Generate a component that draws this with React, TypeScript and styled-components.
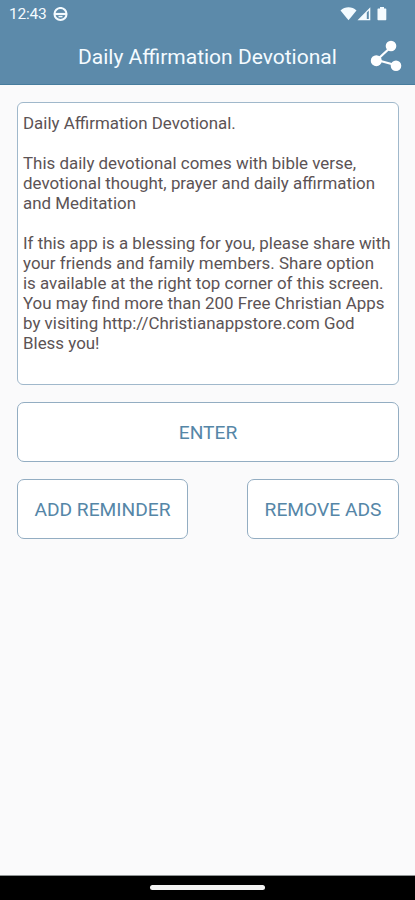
import React from 'react';
import styled, { createGlobalStyle } from 'styled-components';

const GlobalStyle = createGlobalStyle`
  *, *::before, *::after { box-sizing: border-box; }
  body { margin: 0; background: #fafafa; font-family: Roboto, sans-serif; }
`;

const Screen = styled.div`
  display: flex;
  flex-direction: column;
  width: 415px;
  height: 900px;
  background: #fafafb;
  overflow: hidden;
`;

const Header = styled.header`
  flex: none;
  height: 85px;
  background: #5c8aaa;
  border-bottom: 1px solid #477c9d;
  color: #f4fbff;
`;

const StatusBar = styled.div`
  display: flex;
  align-items: center;
  justify-content: space-between;
  height: 28px;
  padding: 0 28px 0 9px;
`;

const StatusGroup = styled.div<{ $gap: number }>`
  display: flex;
  align-items: center;
  gap: ${({ $gap }) => $gap}px;
`;

const Clock = styled.span`
  width: 38px;
  font-size: 15.5px;
  line-height: 28px;
  letter-spacing: -0.2px;
  white-space: nowrap;
`;

const TitleBar = styled.div`
  display: flex;
  align-items: center;
  justify-content: space-between;
  height: 56px;
  padding: 0 13px 0 78px;
`;

const Title = styled.h1`
  margin: 0;
  padding-top: 2px;
  font-size: 21px;
  font-weight: 400;
  line-height: 28px;
  white-space: nowrap;
`;

const IconButton = styled.button`
  display: flex;
  padding: 0;
  border: 0;
  background: none;
  color: #fff;
`;

const Content = styled.main`
  flex: 1;
  display: flex;
  flex-direction: column;
  gap: 17px;
  padding: 17px 16px 0 17px;
`;

const Message = styled.section`
  height: 283px;
  padding: 10px 0 0 5px;
  border: 1px solid #a0b8cb;
  border-radius: 6px;
  background: #fff;
  color: #5c5355;
  font-size: 16.92px;
  font-weight: 400;
  line-height: 20px;
  white-space: pre;
`;

const ButtonRow = styled.div`
  display: flex;
  justify-content: space-between;
`;

const OutlineButton = styled.button<{ $width: number }>`
  width: ${({ $width }) => $width}px;
  height: 60px;
  padding: 0;
  border: 1px solid #93adc2;
  border-radius: 7px;
  background: #fff;
  color: #5586a7;
  font-family: inherit;
  font-size: 19.2px;
  font-weight: 400;
  white-space: nowrap;
`;

const NavigationBar = styled.footer`
  flex: none;
  display: flex;
  justify-content: center;
  height: 25px;
  padding-top: 9px;
  border-top: 1px solid #8f9494;
  background: #000;
`;

const HomeHandle = styled.div`
  width: 115px;
  height: 5px;
  border-radius: 3px;
  background: #f3f3f3;
`;

const message = `Daily Affirmation Devotional.

This daily devotional comes with bible verse,
devotional thought, prayer and daily affirmation
and Meditation

If this app is a blessing for you, please share with
your friends and family members. Share option
is available at the right top corner of this screen.
You may find more than 200 Free Christian Apps
by visiting http://Christianappstore.com God
Bless you!`;

const NotificationIcon = () => (
  <svg width="15" height="15" viewBox="0 0 15 15" fill="none" stroke="currentColor">
    <circle cx="7.5" cy="7" r="6" strokeWidth="2.1" />
    <path d="M1.5 7h12" strokeWidth="2.2" />
    <path d="M5.5 9.6h4" strokeWidth="1.4" />
  </svg>
);

const WifiIcon = () => (
  <svg width="17" height="14" viewBox="0 0 17 14" fill="currentColor">
    <path d="M.5 3.6C5-.8 12-.8 16.5 3.6L8.5 13.2z" />
  </svg>
);

const SignalIcon = () => (
  <svg width="14" height="14" viewBox="0 0 14 14" fill="currentColor">
    <path fillRule="evenodd" d="M.5 13.3L13.3.2v13.1zM9.8 5.5v6.4h2V3.5z" />
  </svg>
);

const BatteryIcon = () => (
  <svg width="10" height="14" viewBox="0 0 10 14" fill="currentColor">
    <path d="M3 0h4v1.5h1.6q.7 0 .7.7v10.4q0 .7-.7.7H1.2q-.7 0-.7-.7V2.2q0-.7.7-.7H3z" />
  </svg>
);

const ShareIcon = () => (
  <svg width="32" height="32" viewBox="0 0 32 32" fill="currentColor">
    <path d="M22.5 5.5L7 20L27 25.5" fill="none" stroke="currentColor" strokeWidth="2.2" />
    <circle cx="21" cy="6" r="5.3" />
    <circle cx="6.3" cy="20.7" r="5.5" />
    <circle cx="26" cy="25.7" r="5.3" />
  </svg>
);

export default function App() {
  return (
    <>
      <GlobalStyle />
      <Screen>
        <Header>
          <StatusBar>
            <StatusGroup $gap={6}>
              <Clock>12:43</Clock>
              <NotificationIcon />
            </StatusGroup>
            <StatusGroup $gap={6}>
              <StatusGroup $gap={0}>
                <WifiIcon />
                <SignalIcon />
              </StatusGroup>
              <BatteryIcon />
            </StatusGroup>
          </StatusBar>
          <TitleBar>
            <Title>Daily Affirmation Devotional</Title>
            <IconButton aria-label="Share">
              <ShareIcon />
            </IconButton>
          </TitleBar>
        </Header>
        <Content>
          <Message>{message}</Message>
          <OutlineButton $width={382}>ENTER</OutlineButton>
          <ButtonRow>
            <OutlineButton $width={171}>ADD REMINDER</OutlineButton>
            <OutlineButton $width={152}>REMOVE ADS</OutlineButton>
          </ButtonRow>
        </Content>
        <NavigationBar>
          <HomeHandle />
        </NavigationBar>
      </Screen>
    </>
  );
}
